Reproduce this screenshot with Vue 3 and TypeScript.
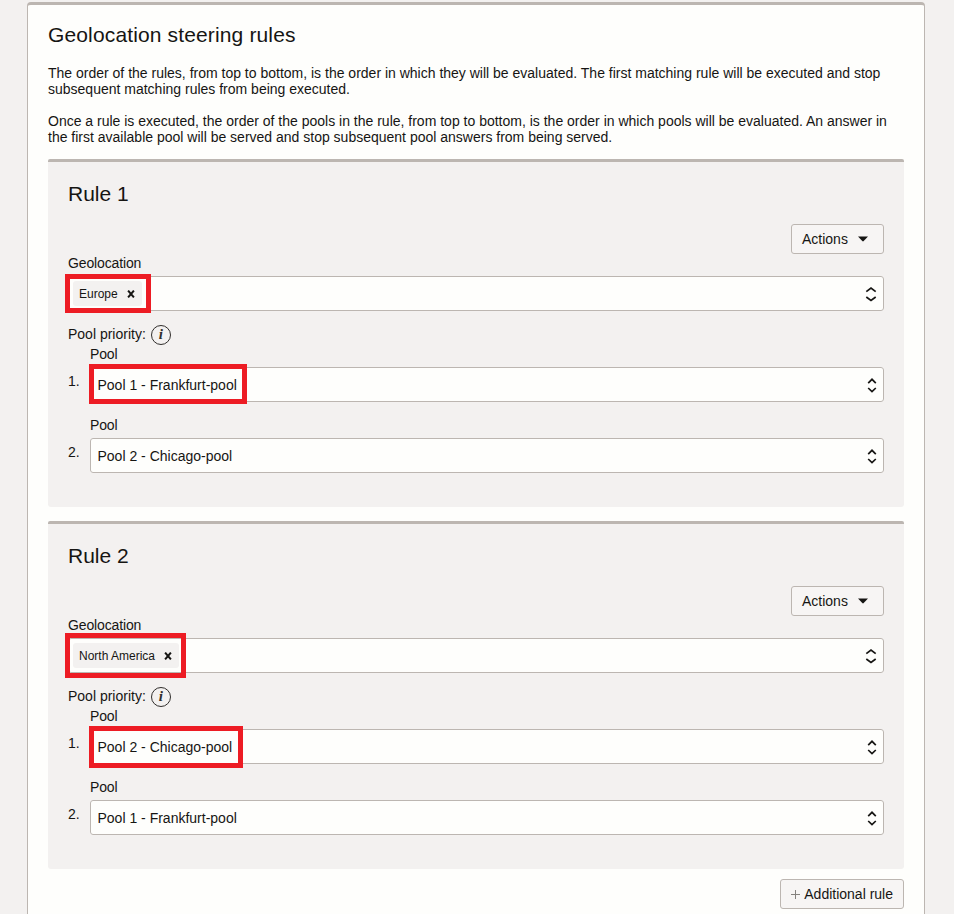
<script setup lang="ts">
import { ref } from 'vue'

interface Highlight {
  left: number
  top: number
  width: number
  height: number
}

interface Pool {
  name: string
  highlight?: Highlight
}

interface Rule {
  title: string
  geolocation: string
  highlight: Highlight
  pools: Pool[]
}

const rules = ref<Rule[]>([
  {
    title: 'Rule 1',
    geolocation: 'Europe',
    highlight: { left: -3, top: -2, width: 86, height: 39 },
    pools: [
      { name: 'Pool 1 - Frankfurt-pool', highlight: { left: -1, top: -3, width: 158, height: 40 } },
      { name: 'Pool 2 - Chicago-pool' },
    ],
  },
  {
    title: 'Rule 2',
    geolocation: 'North America',
    highlight: { left: -3, top: -5, width: 121, height: 45 },
    pools: [
      { name: 'Pool 2 - Chicago-pool', highlight: { left: -1, top: -3, width: 154, height: 42 } },
      { name: 'Pool 1 - Frankfurt-pool' },
    ],
  },
])

const box = (h: Highlight) => ({
  left: `${h.left}px`,
  top: `${h.top}px`,
  width: `${h.width}px`,
  height: `${h.height}px`,
})
</script>

<template>
  <main class="page">
    <section class="card">
      <h1 class="title">Geolocation steering rules</h1>
      <p class="text">
        The order of the rules, from top to bottom, is the order in which they will be evaluated. The first matching rule will be executed and stop<br />
        subsequent matching rules from being executed.
      </p>
      <p class="text">
        Once a rule is executed, the order of the pools in the rule, from top to bottom, is the order in which pools will be evaluated. An answer in<br />
        the first available pool will be served and stop subsequent pool answers from being served.
      </p>

      <article v-for="rule in rules" :key="rule.title" class="rule">
        <h2 class="title">{{ rule.title }}</h2>
        <div class="actions">
          <button class="btn actions-btn" type="button">
            Actions
            <svg width="10" height="6" viewBox="0 0 10 6"><path d="M0 .6h10L5.7 5.1q-.7.7-1.4 0z" fill="#161513" /></svg>
          </button>
        </div>

        <div class="label tight">Geolocation</div>
        <div class="field geo">
          <span class="chip">
            {{ rule.geolocation }}
            <svg width="8" height="8" viewBox="0 0 8 8"><path d="M1.1 .6l5.8 6.8M6.9 .6L1.1 7.4" stroke="#161513" stroke-width="2" /></svg>
          </span>
          <svg class="arrows" width="12" height="16" viewBox="0 0 12 16">
            <path d="M1.3 5.7L6 2l4.7 3.7M1.3 11L6 14.5l4.7-3.5" fill="none" stroke="#161513" stroke-width="1.7" />
          </svg>
          <span class="highlight" :style="box(rule.highlight)"></span>
        </div>

        <div class="priority">
          <span>Pool priority:</span>
          <span class="info">i</span>
        </div>

        <div v-for="(pool, i) in rule.pools" :key="i" class="pool">
          <span class="number">{{ i + 1 }}.</span>
          <div class="pool-body">
            <div class="label tight">Pool</div>
            <div class="field select">
              <span>{{ pool.name }}</span>
              <svg class="arrows" width="10" height="16" viewBox="0 0 10 16">
                <path d="M1.2 6.1L5 2.3l3.8 3.8M1.2 11L5 14.6 8.8 11" fill="none" stroke="#161513" stroke-width="1.7" />
              </svg>
              <span v-if="pool.highlight" class="highlight" :style="box(pool.highlight)"></span>
            </div>
          </div>
        </div>
      </article>

      <footer class="footer">
        <button class="btn add" type="button">
          <svg width="9" height="9" viewBox="0 0 9 9"><path d="M0 4.5h9M4.5 0v9" stroke="#85827e" stroke-width="1" /></svg>
          Additional rule
        </button>
      </footer>
    </section>
  </main>
</template>

<style>
body {
  background: #f3f1f0;
}
</style>

<style scoped>
* {
  box-sizing: border-box;
}
svg {
  display: block;
  flex: none;
}
.page {
  height: 914px;
  overflow: hidden;
  padding: 2px 29px 0 27px;
  background: #f3f1f0;
  color: #161513;
  font: 14px/16px 'Liberation Sans', Arial, sans-serif;
}
.card {
  height: 940px;
  padding: 18px 20px 0;
  background: #fefefc;
  border: 1px solid #bcb6b1;
  border-top-width: 3px;
  border-radius: 4px 4px 0 0;
}
.title {
  margin: 0;
  font-size: 21px;
  line-height: 24px;
  font-weight: 400;
}
.text {
  margin: 0 0 16px;
  white-space: nowrap;
}
.card > .title {
  margin-bottom: 18px;
  letter-spacing: 0.14px;
}
.rule {
  height: 348px;
  margin-bottom: 14px;
  padding: 20px;
  background: #f3f1f0;
  border-top: 3px solid #bcb6b1;
  border-radius: 2px 2px 3px 3px;
}
.text + .rule {
  margin-top: -2px;
}
.actions {
  display: flex;
  justify-content: flex-end;
  margin: 18px 0 1px;
}
.btn {
  display: flex;
  align-items: center;
  height: 30px;
  padding: 0 10px;
  background: #f7f5f4;
  border: 1px solid #bcb6b1;
  border-radius: 3px;
  color: #161513;
  font: inherit;
}
.actions-btn {
  width: 93px;
  gap: 10px;
}
.label {
  height: 21px;
  line-height: 16px;
}
.tight {
  letter-spacing: -0.14px;
}
.field {
  position: relative;
  display: flex;
  align-items: center;
  justify-content: space-between;
  height: 35px;
  background: #fefefc;
  outline: 1px solid #bcb6b1;
  outline-offset: -1px;
  border-radius: 3px;
}
.geo {
  padding: 0 7px 0 5px;
}
.chip {
  display: flex;
  align-items: center;
  gap: 9px;
  height: 25px;
  padding: 0 7px 0 6px;
  background: #f3f1f0;
  border-radius: 3px;
  font-size: 12px;
}
.select {
  padding: 0 7px 0 7.5px;
}
.highlight {
  position: absolute;
  border: 5px solid #ed1c24;
}
.priority {
  display: flex;
  gap: 5px;
  height: 35px;
  padding-top: 14px;
}
.priority span {
  line-height: 19px;
}
.priority .info {
  width: 20px;
  height: 20px;
  border: 1.5px solid #302e2c;
  border-radius: 50%;
  color: #302e2c;
  font: italic 700 15px/17px 'Liberation Serif', serif;
  text-align: center;
}
.pool {
  display: flex;
  height: 71px;
}
.number {
  width: 22px;
  padding-top: 27px;
}
.pool-body {
  flex: 1;
}
.footer {
  display: flex;
  justify-content: flex-end;
  margin-top: -4px;
}
.add {
  gap: 4px;
}
</style>
